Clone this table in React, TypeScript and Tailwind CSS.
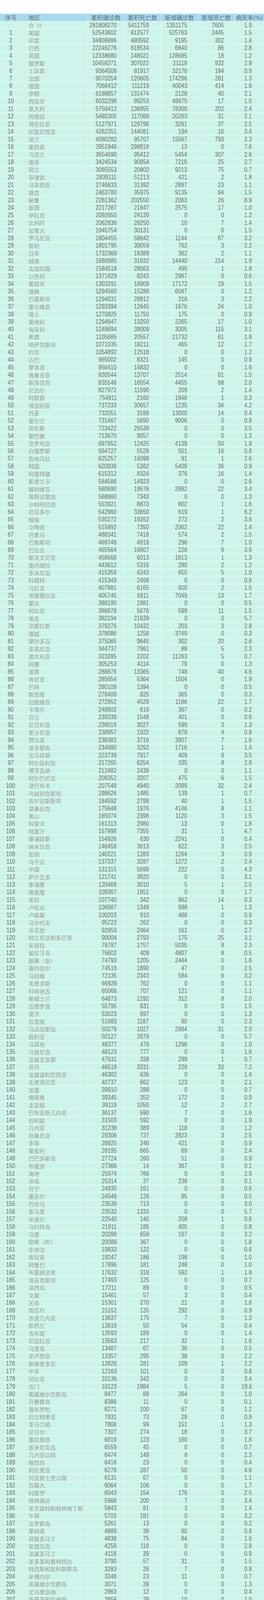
const raw = `
1 美国 52543602 812577 525763 2445 1.5
2 印度 34808886 480592 9195 302 1.4
3 巴西 22246276 618534 6840 86 2.8
4 英国 12338680 148021 128685 18 1.2
5 俄罗斯 10458271 307022 21119 932 2.9
6 土耳其 9364508 81917 32176 184 0.9
7 法国 9070254 120605 174296 281 1.3
8 德国 7066412 111219 40043 414 1.6
9 伊朗 6188857 131474 2128 40 2.1
10 西班牙 6032298 89253 48675 17 1.5
11 意大利 5756412 136955 78300 202 2.4
12 阿根廷 5480305 117066 20263 31 2.1
13 哥伦比亚 5127971 129798 3281 37 2.5
14 印度尼西亚 4262351 144081 194 10 3.4
15 波兰 4080282 95707 15567 793 2.3
16 墨西哥 3951946 298819 13 0 7.6
17 乌克兰 3654690 95412 5454 307 2.6
18 南非 3424534 90854 7216 25 2.7
19 荷兰 3085553 20802 9213 75 0.7
20 菲律宾 2839111 51213 421 2 1.8
21 马来西亚 2746833 31392 2897 23 1.1
22 捷克 2463780 35975 9135 64 1.5
23 秘鲁 2281362 202550 2063 26 8.9
24 泰国 2217287 21647 2575 17 1.0
25 伊拉克 2092650 24139 0 0 1.2
26 比利时 2062836 28250 10 7 1.4
27 加拿大 1945754 30131 0 0 1.5
28 罗马尼亚 1804455 58642 1144 67 3.2
29 智利 1801795 39059 762 3 2.2
30 日本 1732369 18389 362 2 1.1
31 越南 1680985 31632 14440 214 1.9
32 孟加拉国 1584518 28063 495 1 1.8
33 以色列 1371629 8243 2967 0 0.6
34 葡萄牙 1303291 18909 17172 19 1.5
35 瑞典 1294560 15286 6047 0 1.2
36 巴基斯坦 1294031 28912 316 3 2.2
37 塞尔维亚 1293394 12645 1676 24 1.0
38 瑞士 1270825 11750 175 0 0.9
39 奥地利 1264647 13250 2265 17 1.0
40 匈牙利 1249694 39009 3005 115 3.1
41 希腊 1105885 20557 21732 61 1.9
42 哈萨克斯坦 1071035 18211 465 12 1.7
43 约旦 1054892 12518 0 0 1.2
44 古巴 965002 8321 145 0 0.9
45 摩洛哥 956410 14832 0 0 1.6
46 格鲁吉亚 930544 13707 2514 61 1.5
47 斯洛伐克 835548 16554 4455 68 2.0
48 尼泊尔 827972 11590 209 2 1.4
49 阿联酋 754911 2160 1846 1 0.3
50 保加利亚 737233 30657 1235 34 4.2
51 丹麦 732051 3188 13000 14 0.4
52 爱尔兰 731467 5890 9006 0 0.8
53 突尼斯 723422 25538 0 0 3.5
54 黎巴嫩 713670 9057 0 0 1.3
55 克罗地亚 697952 12425 4139 50 1.8
56 白俄罗斯 694727 5528 501 16 0.8
57 危地马拉 625257 16098 91 1 2.6
58 韩国 620938 5382 5409 36 0.9
59 阿塞拜疆 615312 8324 376 16 1.4
60 斯里兰卡 584586 14923 0 0 2.6
61 玻利维亚 580690 19576 2882 22 3.4
62 哥斯达黎加 568860 7343 0 0 1.3
63 沙特阿拉伯 553921 8873 602 1 1.6
64 厄瓜多尔 542960 33650 619 1 6.2
65 缅甸 530272 19262 272 2 3.6
66 立陶宛 515892 7350 2062 22 1.4
67 巴拿马 488341 7418 574 2 1.5
68 巴勒斯坦 469748 4919 296 7 1.0
69 巴拉圭 465564 16607 226 6 3.6
70 斯洛文尼亚 458568 6013 1813 1 1.3
71 委内瑞拉 443612 5316 280 2 1.2
72 多米尼加 415359 4243 655 5 1.0
73 科威特 415349 2468 0 0 0.6
74 乌拉圭 407981 6165 600 2 1.5
75 埃塞俄比亚 405745 6911 7049 13 1.7
76 蒙古 388190 1981 0 0 0.5
77 利比亚 386878 5676 599 11 1.5
78 埃及 382194 21639 0 0 5.7
79 洪都拉斯 379276 10432 203 3 2.8
80 挪威 378086 1258 3749 0 0.3
81 摩尔多瓦 375065 9645 302 20 2.6
82 亚美尼亚 344737 7961 88 5 2.3
83 澳大利亚 323285 2202 11263 5 0.7
84 阿曼 305253 4114 79 0 1.3
85 波黑 288876 13365 748 40 4.6
86 肯尼亚 285654 5364 1504 0 1.9
87 巴林 280109 1394 0 0 0.5
88 新加坡 278409 825 365 0 0.3
89 拉脱维亚 272952 4529 1186 22 1.7
90 卡塔尔 248802 616 367 0 0.2
91 芬兰 239339 1548 401 0 0.6
92 尼日利亚 239019 3027 599 3 1.3
93 爱沙尼亚 238957 1922 878 4 0.8
94 赞比亚 238383 3716 3907 7 1.6
95 波多黎各 234980 3292 1716 1 1.4
96 北马其顿 223739 7917 409 9 3.5
97 阿尔及利亚 217265 6254 335 8 2.9
98 博茨瓦纳 212482 2439 0 0 1.1
99 阿尔巴尼亚 208352 3207 475 6 1.5
100 津巴布韦 207548 4940 2099 32 2.4
101 乌兹别克斯坦 198626 1485 139 1 0.7
102 吉尔吉斯斯坦 184592 2799 40 1 1.5
103 莫桑比克 175648 1976 4146 8 1.1
104 黑山 165074 2398 1120 3 1.5
105 科索沃 161313 2980 13 0 1.8
106 阿富汗 157998 7355 31 1 4.7
107 塞浦路斯 154926 630 2241 0 0.4
108 纳米比亚 146459 3613 822 3 2.5
109 加纳 140221 1283 1264 3 0.9
110 乌干达 137337 3287 1272 2 2.4
111 中国 131315 5699 222 0 4.3
112 萨尔瓦多 121741 3820 0 0 3.1
113 柬埔寨 120469 3010 5 1 2.5
114 喀麦隆 109367 1851 0 0 1.7
115 老挝 107740 342 962 14 0.3
116 卢旺达 106987 1349 998 1 1.3
117 卢森堡 100203 910 486 0 0.9
118 马尔代夫 95222 262 0 0 0.3
119 牙买加 92950 2464 161 0 2.7
120 特立尼达和多巴哥 90004 2793 175 25 3.1
121 安哥拉 76787 1757 5035 8 2.3
122 留尼汪岛 76602 409 4807 8 0.5
123 刚果（金） 74793 1205 2444 0 1.6
124 塞内加尔 74516 1890 47 0 2.5
125 马拉维 72135 2343 584 6 3.2
126 毛里求斯 66929 762 0 0 1.1
127 科特迪瓦 65066 707 121 0 1.1
128 斯威士兰 64873 1292 312 8 2.0
129 瓜德罗普 55795 831 0 0 1.5
130 斐济 53023 697 0 0 1.3
131 苏里南 51683 1187 90 0 2.3
132 马达加斯加 50279 1027 2984 31 2.0
133 叙利亚 50127 2879 0 0 5.7
134 马耳他 48377 476 1298 0 1.0
135 马提尼克 48123 777 0 0 1.6
136 法属圭亚那 47631 338 299 1 0.7
137 苏丹 46518 3331 226 33 7.2
138 法属波利尼西亚 46382 636 0 0 1.4
139 毛里塔尼亚 40737 862 123 0 2.1
140 加蓬 39910 288 0 0 0.7
141 佛得角 39345 352 172 0 0.9
142 圭亚那 39119 1050 12 2 2.7
143 巴布亚新几内亚 36137 590 7 0 1.6
144 伯利兹 31503 592 0 0 1.9
145 几内亚 31238 389 118 0 1.2
146 坦桑尼亚 29306 737 2823 3 2.5
147 多哥 28925 246 421 0 0.9
148 莱索托 28195 665 69 0 2.4
149 巴巴多斯岛 27724 260 51 0 0.9
150 布隆迪 27366 14 367 0 0.1
151 海地 25974 766 0 0 2.9
152 冰岛 25314 37 238 0 0.1
153 贝宁 24935 161 0 0 0.6
154 塞舌尔 24546 126 95 0 0.5
155 巴哈马 23539 713 0 0 3.0
156 索马里 23532 1333 0 0 5.7
157 安道尔 22540 140 208 1 0.6
158 马约特岛 21911 185 405 0 0.8
159 马里 20288 658 167 0 3.2
160 刚果（布） 20089 367 0 0 1.8
161 东帝汶 19833 122 0 0 0.6
162 库拉索 19247 186 198 0 1.0
163 阿鲁巴 17896 181 248 0 1.0
164 布基纳法索 17632 318 592 1 1.8
165 塔吉克斯坦 17493 125 0 0 0.7
166 泽西岛 17211 89 0 0 0.5
167 文莱 15461 57 3 0 0.4
168 关岛 15301 270 21 0 1.8
169 南苏丹 15152 135 292 0 0.9
170 赤道几内亚 13637 175 7 0 1.3
171 新西兰 13616 50 54 0 0.4
172 吉布提 13593 189 0 0 1.4
173 尼加拉瓜 13563 217 32 1 1.6
174 马恩岛 13487 67 36 0 0.5
175 圣卢西亚 13357 295 38 0 2.2
176 新喀里多尼 12826 281 109 1 2.2
177 中非 12163 101 0 0 0.8
178 冈比亚 10136 342 0 0 3.4
179 也门 10123 1984 5 0 19.6
180 美属维尔京群岛 8477 88 264 0 1.0
181 开曼群岛 8386 11 0 0 0.1
182 直布罗陀 8271 100 67 0 1.2
183 厄立特里亚 7931 73 29 0 0.9
184 圣马力诺 7808 99 151 1 1.3
185 尼日尔 7307 274 18 0 3.7
186 塞拉里昂 6819 123 160 0 1.8
187 多米尼克岛 6559 45 0 0 0.7
188 几内亚比绍 6474 149 8 0 2.3
189 根西岛 6416 23 0 0 0.4
190 利比里亚 6278 287 50 0 4.6
191 列支敦士登公国 6131 67 0 0 1.1
192 百慕大 6064 106 0 0 1.7
193 科摩罗 6043 154 176 0 2.5
194 格林纳达 5968 200 7 0 3.4
195 圣文森特和格林纳丁斯 5843 81 3 0 1.4
196 乍得 5703 181 0 0 3.2
197 法罗群岛 5261 13 0 0 0.2
198 摩纳哥 4889 38 80 0 0.8
199 荷属圣马丁 4838 75 64 0 1.6
200 安提瓜岛 4259 118 0 0 2.8
201 法属圣马丁 4118 39 0 0 0.9
202 圣多美和普林西比 3790 57 31 0 1.5
203 特克斯和凯科斯群岛 3283 26 7 0 0.8
204 辛博内尔 3246 23 11 0 0.7
205 英属维尔京群岛 3071 39 0 0 1.3
206 北马里亚纳 2963 12 0 0 0.4
207 圣基茨和尼维斯 2858 28 10 0 1.0
208 不丹 2660 3 0 0 0.1
209 格陵兰 2437 1 74 0 -
210 圣巴泰勒米 1726 4 0 0 0.2
211 安圭拉 1674 5 28 0 0.3
212 其他 764 13 0 0 1.7
213 瓦利斯和富图 454 7 0 0 1.5
214 圣皮埃尔和密克隆 98 0 0 0 -
215 马尔维纳斯群岛 81 0 0 0 -
216 蒙塞拉特岛 45 1 0 0 2.2
217 圣尤斯特歇斯岛 31 0 0 0 -
218 萨巴 30 0 7 0 -
219 梵蒂冈 26 0 0 0 -
220 所罗门群岛 24 0 2 0 -
221 美属萨摩亚 11 0 0 0 -
222 帛琉（帕劳）群岛 10 0 0 0 -
223 瓦努阿图 7 0 0 0 -
224 马绍尔群岛 4 0 0 0 -
225 萨摩亚 2 0 0 0 -
226 汤加王国 1 0 0 0 -
`;

type Row = { no: string; name: string; cells: string[] };

const rows: Row[] = [
  { no: "", name: "合\u2002计", cells: ["281808270", "5411759", "1351175", "7605", "1.9"] },
  ...raw
    .trim()
    .split("\n")
    .map((line) => {
      const [no, name, ...rest] = line.trim().split(/\s+/);
      return { no, name, cells: rest.map((v) => (v === "-" ? "" : v)) };
    }),
];

const headers = ["累积确诊数", "累积死亡数", "新增确诊数", "新增死亡数", "病死率(%)"];
// widths + right padding of the numeric columns, measured off the reference
const numCol = [
  "w-[94px] pr-[19px] border-r",
  "w-[94px] pr-[30px] border-r",
  "w-[95px] pr-[27px] border-r",
  "w-[94px] pr-[27px] border-r",
  "w-[75px] pr-[31px]",
];
const headCol = ["w-[94px] border-r", "w-[94px] border-r", "w-[95px] border-r", "w-[94px] border-r", "w-[75px]"];

export default function App() {
  return (
    <div className="flex w-[677px] flex-col bg-white pt-[35px]">
      <div className="flex h-[19px] shrink-0 overflow-hidden bg-[#a7d9ee] font-['Noto_Sans_CJK_SC','Noto_Sans',sans-serif] text-[15px] leading-none text-[#5f707a]">
        <div className="flex w-[56px] items-center justify-center border-r border-[#d4ecf6]">序号</div>
        <div className="flex w-[169px] items-center border-r border-[#d4ecf6] pl-[17px]">地区</div>
        {headers.map((h, i) => (
          <div key={h} className={`flex items-center justify-center border-[#d4ecf6] ${headCol[i]}`}>
            {h}
          </div>
        ))}
      </div>
      {rows.map((r, idx) => (
        <div
          key={idx}
          className="flex h-[19.48px] shrink-0 overflow-hidden border-t border-[#effcf8] bg-[#cdf4ea] leading-none"
        >
          <div className="flex w-[56px] items-center justify-center border-r border-[#e9faf5] font-['Liberation_Sans_Narrow','Arial_Narrow','Liberation_Sans',Arial,sans-serif] text-[17px] text-[#6f6f6f]">
            <span className="inline-block scale-x-[0.82]">{r.no}</span>
          </div>
          <div className="flex w-[169px] items-center whitespace-pre border-r border-[#e9faf5] pl-[17px] font-['Noto_Sans_CJK_SC','Noto_Sans',sans-serif] text-[14px] text-[#9c9c9c]">
            {r.name}
          </div>
          {r.cells.map((c, i) => (
            <div
              key={i}
              className={`flex items-center justify-end border-[#e9faf5] font-['Liberation_Sans_Narrow','Arial_Narrow','Liberation_Sans',Arial,sans-serif] text-[17px] text-[#6f6f6f] ${numCol[i]}`}
            >
              <span className="inline-block origin-right scale-x-[0.82]">{c}</span>
            </div>
          ))}
        </div>
      ))}
    </div>
  );
}
